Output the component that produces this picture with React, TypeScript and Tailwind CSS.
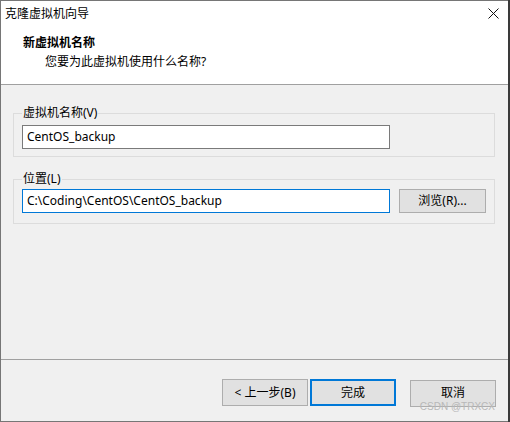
import React from 'react';

const FONT = "font-['Segoe_UI','Noto_Sans','Noto_Sans_CJK_SC',sans-serif]";

function GroupBox({ label, children, className }: { label: string; children: React.ReactNode; className?: string }) {
  return (
    <div className={`relative border border-[#dcdcdc] ml-[12px] mr-[13px] ${className ?? ''}`}>
      <span className="absolute -top-[9px] left-[8px] px-[1px] bg-[#f0f0f0] leading-[16px] text-[12px] text-black">
        {label}
      </span>
      {children}
    </div>
  );
}

function Button({ children, primary }: { children: React.ReactNode; primary?: boolean }) {
  return (
    <button
      className={`w-[86px] h-[27px] bg-[#e1e1e1] text-[12px] text-black leading-none ${
        primary ? 'border-2 border-[#0078d7]' : 'border border-[#adadad]'
      }`}
    >
      {children}
    </button>
  );
}

export default function App() {
  return (
    <div className={`w-[510px] h-[422px] flex ${FONT} select-none`}>
      <div className="w-[508px] h-[422px] flex flex-col border-t border-l border-b border-[#767676] bg-[#f0f0f0]">
        {/* header */}
        <div className="h-[83px] bg-white flex flex-col">
          <div className="h-[25px] flex items-center justify-between pl-[4px] pr-[9px]">
            <span className="text-[12px] text-black">克隆虚拟机向导</span>
            <svg width="11" height="11" viewBox="0 0 11 11">
              <path d="M0.5 0.5 L10.5 10.5 M10.5 0.5 L0.5 10.5" stroke="#111" strokeWidth="1" />
            </svg>
          </div>
          <div className="pl-[22px] pt-[9px] text-[12px] leading-[16px] font-bold text-black">新虚拟机名称</div>
          <div className="pl-[44px] pt-[3px] text-[12px] leading-[16px] text-black">您要为此虚拟机使用什么名称?</div>
        </div>
        <div className="h-px bg-[#a0a0a0]" />

        {/* body */}
        <div className="flex-1 flex flex-col">
          <GroupBox label="虚拟机名称(V)" className="mt-[28px] pt-[11px] pb-[7px] pl-[8px]">
            <div className="w-[368px] h-[24px] bg-white border border-[#7a7a7a] flex items-center pl-[4px] text-[12px] text-black">
              CentOS_backup
            </div>
          </GroupBox>
          <GroupBox label="位置(L)" className="mt-[22px] pt-[9px] pb-[10px] pl-[8px]">
            <div className="flex items-center">
              <div className="w-[368px] h-[24px] bg-white border border-[#0078d7] flex items-center pl-[4px] text-[12px] text-black">
                C:\Coding\CentOS\CentOS_backup
              </div>
              <button className="ml-[9px] w-[87px] h-[24px] bg-[#e1e1e1] border border-[#adadad] text-[12px] text-black">
                浏览(R)...
              </button>
            </div>
          </GroupBox>
        </div>

        {/* footer */}
        <div className="h-px bg-[#a0a0a0]" />
        <div className="relative h-[61px] flex pt-[19px] pr-[12px] justify-end">
          <div className="flex gap-[2px]">
            <Button>&lt; 上一步(B)</Button>
            <Button primary>完成</Button>
          </div>
          <div className="ml-[14px]">
            <Button>取消</Button>
          </div>
          <span className="absolute right-[13px] bottom-[8px] text-[10px] leading-[12px] text-[#b8b8b8] font-['Liberation_Sans',sans-serif]">
            CSDN @TRXCX
          </span>
        </div>
      </div>
      <div className="w-[2px] h-[422px] bg-[#3a3a3a]" />
    </div>
  );
}
